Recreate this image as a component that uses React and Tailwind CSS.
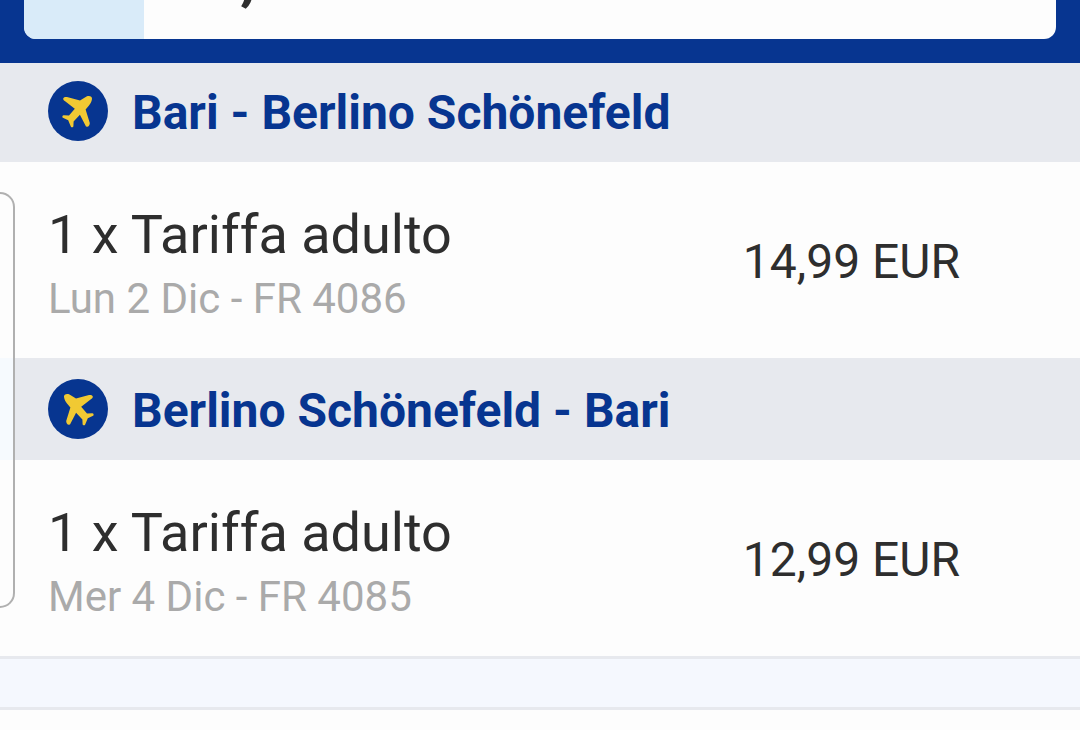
import React from "react";

const flights = [
  {
    route: "Bari - Berlino Schönefeld",
    direction: "outbound",
    fare: "1 x Tariffa adulto",
    details: "Lun 2 Dic - FR 4086",
    price: "14,99 EUR",
  },
  {
    route: "Berlino Schönefeld - Bari",
    direction: "return",
    fare: "1 x Tariffa adulto",
    details: "Mer 4 Dic - FR 4085",
    price: "12,99 EUR",
  },
];

function PlaneBadge({ direction }) {
  return (
    <svg
      viewBox="0 0 60 60"
      className={`w-[60px] h-[60px] shrink-0 ${direction === "return" ? "-scale-x-100" : ""}`}
      aria-hidden="true"
    >
      <circle cx="30" cy="30" r="30" fill="#073590" />
      <path
        fill="#f1c933"
        d="M38.5 15.4 C41 14.4 44.4 15 44 18 C43.6 20.6 42.3 23 40.8 24.8 L37.6 28.6 L41.8 42 C41.9 43.4 40.6 46.2 38.8 45.8 C38 45.6 37.6 44.8 37.1 43.7 L31.9 33.8 L25.6 40.4 L25.4 45.2 C25.2 46.6 23.4 46.8 22.8 45.4 L20.2 39.2 L14.9 36.8 C13.9 36.2 14.3 34.3 15.8 34.2 L21 34.6 L26.8 27.8 L16.8 20 C15.6 19.2 14.9 18.3 15.3 17.2 C15.9 16 17.8 15.8 19 16.1 L32 19.4 Z"
      />
    </svg>
  );
}

function FlightSection({ flight }) {
  const isReturn = flight.direction === "return";

  return (
    <section>
      <div
        className={`relative flex items-center gap-6 px-12 pb-[21px] bg-[#e7e9ee] ${isReturn ? "pt-[21px]" : "pt-[18px]"}`}
      >
        {isReturn && <span className="absolute inset-y-0 left-0 w-[14px] bg-[#f6fafe]" />}
        <PlaneBadge direction={flight.direction} />
        <h2 className="pt-1 text-[48px] leading-[56px] font-bold text-[#073590]">{flight.route}</h2>
      </div>

      <div className="flex items-center justify-between pt-[35px] pb-[33px] pl-12 pr-[120px]">
        <div>
          <p className="text-[54px] leading-[76px] text-[#2e2e2e]">{flight.fare}</p>
          <p className="text-[42px] leading-[52px] text-[#aaaaaa]">{flight.details}</p>
        </div>
        <p className="pt-0.5 text-[48px] leading-[56px] text-[#2e2e2e]">{flight.price}</p>
      </div>
    </section>
  );
}

export default function App() {
  return (
    <div className="min-h-screen flex flex-col overflow-hidden bg-[#fdfdfd] font-['Roboto',sans-serif]">
      {/* Bottom edge of the price card */}
      <header className="bg-[#073590] px-6 pb-6">
        <div className="flex h-[39px] rounded-b-xl overflow-hidden bg-[#fdfdfd]">
          <div className="w-[120px] bg-[#d9ebf9]" />
          <div className="relative grow">
            <span className="absolute left-24 bottom-9 text-[72px] leading-[60px] font-medium text-[#2e2e2e]">
              ,
            </span>
          </div>
        </div>
      </header>

      <main className="relative">
        {flights.map((flight) => (
          <FlightSection key={flight.route} flight={flight} />
        ))}
        {/* Drawer handle on the left edge */}
        <div className="absolute left-0 top-[129px] bottom-[48px] w-[15px] rounded-r-2xl border-2 border-l-0 border-[#b0b0b0]" />
      </main>

      <div className="h-[54px] border-y-3 border-[#e7e9ee] bg-[#f5f8fe]" />
    </div>
  );
}
